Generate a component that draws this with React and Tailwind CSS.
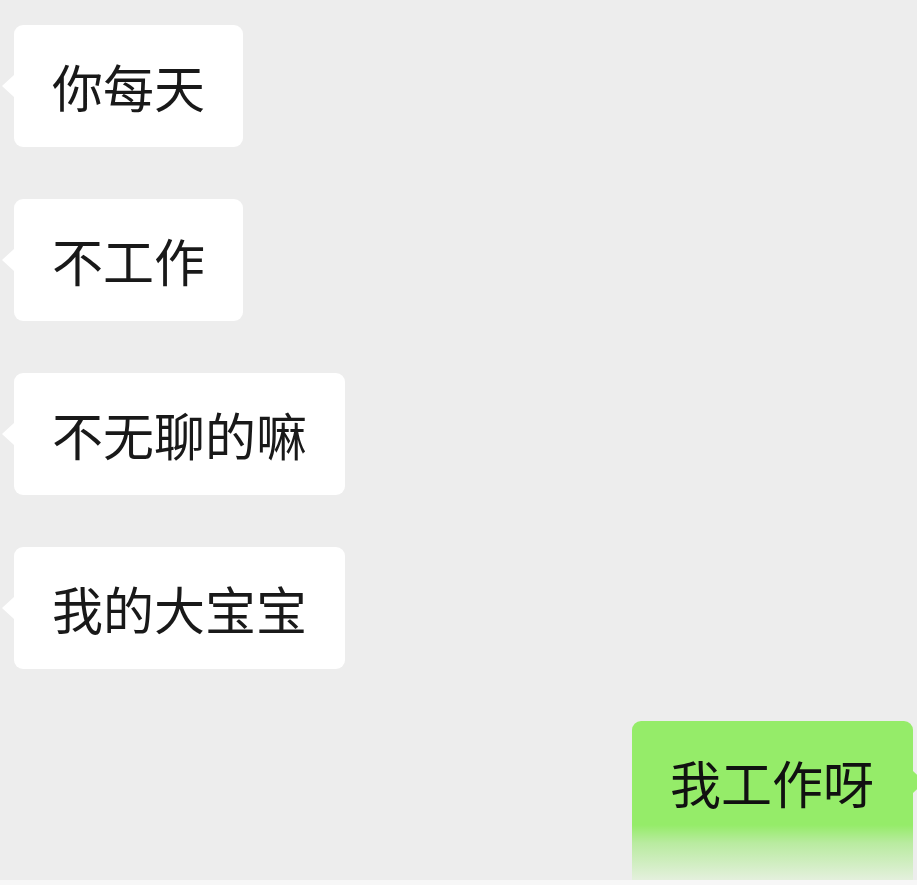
export default function App() {
  const received = ["你每天", "不工作", "不无聊的嘛", "我的大宝宝"];
  const font = { fontFamily: '"Noto Sans CJK SC", "Noto Sans", sans-serif' };
  return (
    <div className="w-[917px] h-[885px] bg-[#ededed] overflow-hidden flex flex-col" style={font}>
      <div className="flex flex-col gap-[52px] pt-[25px] pl-[14px] pr-[4px] h-[880px]">
        {received.map((t) => (
          <div key={t} className="relative self-start">
            <div className="absolute left-[-12px] top-1/2 -translate-y-1/2 w-0 h-0 border-y-[11px] border-y-transparent border-r-[12px] border-r-white" />
            <div className="h-[122px] px-[38px] flex items-center bg-white rounded-[9px] text-[51px] leading-none text-[#191919]">
              {t}
            </div>
          </div>
        ))}
        <div className="relative self-end">
          <div className="absolute right-[-12px] top-[50px] w-0 h-0 border-y-[11px] border-y-transparent border-l-[12px] border-l-[#95ec69]" />
          <div className="h-[159px] w-[281px] rounded-t-[9px] bg-[linear-gradient(to_bottom,#95ec69_0px,#95ec69_104px,#b9eba0_122px,#e4f0dd_159px)]">
            <div className="h-[122px] px-[38px] flex items-center text-[51px] leading-none text-[#111]">
              我工作呀
            </div>
          </div>
        </div>
      </div>
      <div className="h-[5px] bg-[#f7f7f7]" />
    </div>
  );
}
